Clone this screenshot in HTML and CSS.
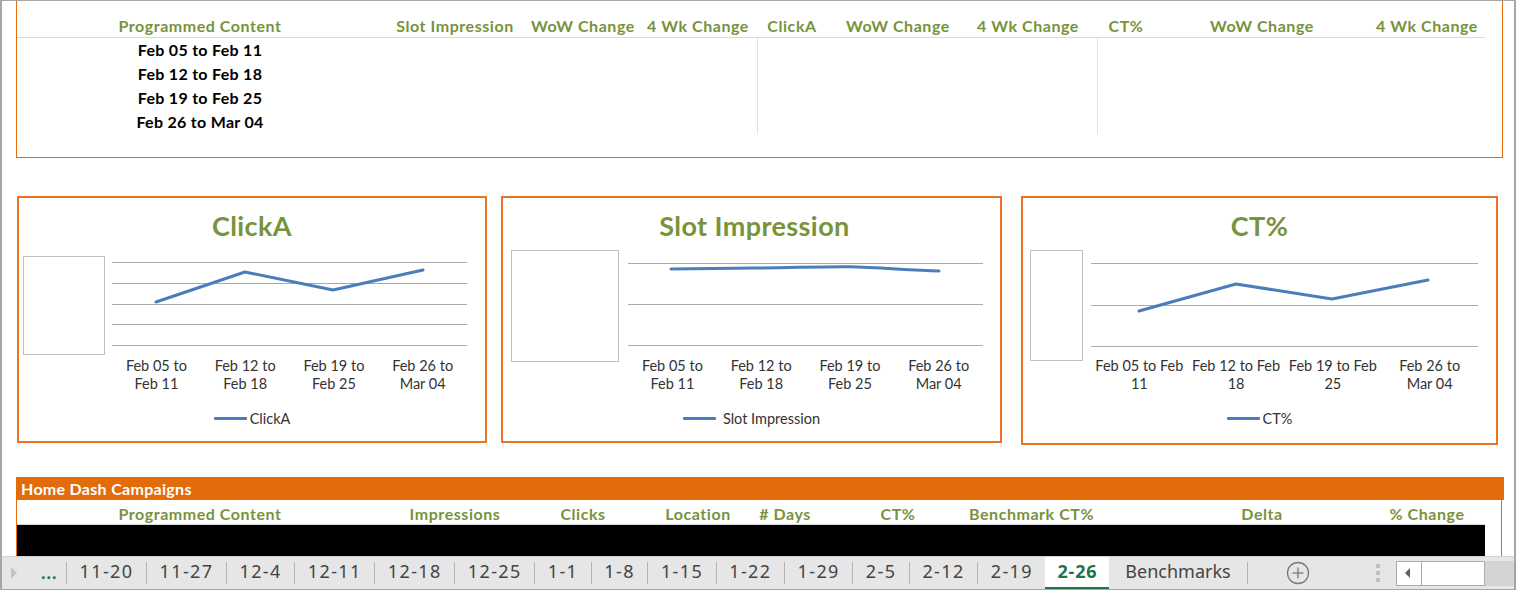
FILE: index.html
```html
<!DOCTYPE html>
<html>
<head>
<meta charset="utf-8">
<link rel="stylesheet" href="styles.css">
</head>
<body>
<div class="window">
  <div class="sheet">
    <section class="top-box">
      <div class="cols hdr-row hdr-top">
        <div class="hdr">Programmed Content</div>
        <div class="hdr">Slot Impression</div>
        <div class="hdr">WoW Change</div>
        <div class="hdr">4 Wk Change</div>
        <div class="hdr">ClickA</div>
        <div class="hdr">WoW Change</div>
        <div class="hdr c7">4 Wk Change</div>
        <div class="hdr">CT%</div>
        <div class="hdr">WoW Change</div>
        <div class="hdr">4 Wk Change</div>
      </div>
      <div class="top-body">
        <div class="grp g1">
          <div class="dates">
            <div>Feb 05 to Feb 11</div>
            <div>Feb 12 to Feb 18</div>
            <div>Feb 19 to Feb 25</div>
            <div>Feb 26 to Mar 04</div>
          </div>
        </div>
        <div class="grp g2"></div>
        <div class="grp g3"></div>
      </div>
    </section>

    <div class="charts">
      <div class="chart ch1">
        <div class="ctitle">ClickA</div>
        <div class="cbody">
          <div class="ybox"></div>
          <div class="plot">
            <svg class="psvg" width="355" height="103" viewBox="0 0 355 103">
              <g class="grid">
                <line x1="0" y1="18.5" x2="355" y2="18.5"/>
                <line x1="0" y1="39.5" x2="355" y2="39.5"/>
                <line x1="0" y1="60.5" x2="355" y2="60.5"/>
                <line x1="0" y1="80.5" x2="355" y2="80.5"/>
                <line x1="0" y1="101.5" x2="355" y2="101.5"/>
              </g>
              <polyline class="series" points="44,58 133,28 221,46 311,26"/>
            </svg>
            <div class="xlabels">
              <div>Feb 05 to<br>Feb 11</div>
              <div>Feb 12 to<br>Feb 18</div>
              <div>Feb 19 to<br>Feb 25</div>
              <div>Feb 26 to<br>Mar 04</div>
            </div>
          </div>
        </div>
        <div class="legend"><span class="lkey"></span><span>ClickA</span></div>
      </div>

      <div class="chart ch2">
        <div class="ctitle">Slot Impression</div>
        <div class="cbody">
          <div class="ybox"></div>
          <div class="plot">
            <svg class="psvg" width="355" height="103" viewBox="0 0 355 103">
              <g class="grid">
                <line x1="0" y1="19.5" x2="355" y2="19.5"/>
                <line x1="0" y1="60.5" x2="355" y2="60.5"/>
                <line x1="0" y1="101.5" x2="355" y2="101.5"/>
              </g>
              <path class="series" d="M43,25 C90,24.5 110,24.3 132,24 C170,23.5 200,22.5 221,22.8 C250,23.5 280,26 311,27"/>
            </svg>
            <div class="xlabels">
              <div>Feb 05 to<br>Feb 11</div>
              <div>Feb 12 to<br>Feb 18</div>
              <div>Feb 19 to<br>Feb 25</div>
              <div>Feb 26 to<br>Mar 04</div>
            </div>
          </div>
        </div>
        <div class="legend"><span class="lkey"></span><span>Slot Impression</span></div>
      </div>

      <div class="chart ch3">
        <div class="ctitle">CT%</div>
        <div class="cbody">
          <div class="ybox"></div>
          <div class="plot">
            <svg class="psvg" width="387" height="104" viewBox="0 0 387 104">
              <g class="grid">
                <line x1="0" y1="19.5" x2="387" y2="19.5"/>
                <line x1="0" y1="61.5" x2="387" y2="61.5"/>
                <line x1="0" y1="102.5" x2="387" y2="102.5"/>
              </g>
              <polyline class="series" points="48,67 145,40 241,55 337,36"/>
            </svg>
            <div class="xlabels">
              <div>Feb 05 to Feb<br>11</div>
              <div>Feb 12 to Feb<br>18</div>
              <div>Feb 19 to Feb<br>25</div>
              <div>Feb 26 to<br>Mar 04</div>
            </div>
          </div>
        </div>
        <div class="legend"><span class="lkey"></span><span>CT%</span></div>
      </div>
    </div>

    <section class="campaigns">
      <div class="camp-title">Home Dash Campaigns</div>
      <div class="camp-body">
        <div class="cols hdr-row hdr-camp">
          <div class="hdr">Programmed Content</div>
          <div class="hdr">Impressions</div>
          <div class="hdr">Clicks</div>
          <div class="hdr">Location</div>
          <div class="hdr days">#&nbsp;Days</div>
          <div class="hdr">CT%</div>
          <div class="hdr c7">Benchmark CT%</div>
          <div class="hdr"></div>
          <div class="hdr">Delta</div>
          <div class="hdr">% Change</div>
        </div>
        <div class="black"></div>
      </div>
    </section>
  </div>

  <div class="tabbar">
    <div class="nav">
      <svg class="navarrow" width="7" height="12" viewBox="0 0 7 12"><path d="M0,0 L6,6 L0,12 Z"/></svg>
      <span class="more">...</span>
    </div>
    <i class="sep"></i>
    <div class="tab">11-20</div><i class="sep"></i>
    <div class="tab">11-27</div><i class="sep"></i>
    <div class="tab">12-4</div><i class="sep"></i>
    <div class="tab">12-11</div><i class="sep"></i>
    <div class="tab">12-18</div><i class="sep"></i>
    <div class="tab">12-25</div><i class="sep"></i>
    <div class="tab">1-1</div><i class="sep"></i>
    <div class="tab">1-8</div><i class="sep"></i>
    <div class="tab">1-15</div><i class="sep"></i>
    <div class="tab">1-22</div><i class="sep"></i>
    <div class="tab">1-29</div><i class="sep"></i>
    <div class="tab">2-5</div><i class="sep"></i>
    <div class="tab">2-12</div><i class="sep"></i>
    <div class="tab">2-19</div>
    <div class="tab active">2-26</div>
    <div class="tab bench">Benchmarks</div><i class="sep"></i>
    <svg class="plus" width="24" height="24" viewBox="0 0 24 24">
      <circle cx="12" cy="12" r="10.5"/>
      <line x1="12" y1="6.5" x2="12" y2="17.5"/>
      <line x1="6.5" y1="12" x2="17.5" y2="12"/>
    </svg>
    <div class="vdots"><b></b><b></b><b></b></div>
    <div class="hscroll">
      <div class="sbtn"><svg width="5" height="10" viewBox="0 0 5 10"><path d="M5,0 L0,5 L5,10 Z"/></svg></div>
      <div class="strack"></div>
    </div>
    <div class="sfill"></div>
  </div>
</div>
</body>
</html>
```

FILE: styles.css
```css
* { box-sizing: border-box; margin: 0; padding: 0; }
html, body { width: 1516px; height: 590px; overflow: hidden; background: #fff; }
body { font-family: Lato, "Liberation Sans", sans-serif; }

.window {
  width: 1516px;
  height: 590px;
  border-top: 1px solid #a6a6a6;
  border-left: 2px solid #a6a6a6;
  border-right: 2px solid #a6a6a6;
  display: flex;
  flex-direction: column;
}
.sheet { height: 555px; flex: none; overflow: hidden; }

/* ---------- top summary table ---------- */
.top-box {
  margin-left: 14px;
  width: 1487px;
  border: 1px solid #e46c0a;
  border-top: none;
  padding-bottom: 23px;
}
.cols {
  display: grid;
  grid-template-columns: 366px 144px 112px 118px 70px 142px 128px 58px 214px 116px;
  width: 1468px;
}
.hdr-row { align-items: end; border-bottom: 1px solid #d9d9d9; }
.hdr-top { height: 37px; padding-bottom: 1px; }
.hdr {
  color: #77933c;
  font-weight: 700;
  font-size: 16px;
  letter-spacing: 0.55px;
  line-height: 20px;
  text-align: center;
  white-space: nowrap;
}
.hdr.c7 { padding-right: 10px; }
.hdr.days { padding-right: 14px; }

.top-body { display: flex; height: 96px; }
.g1 { width: 740px; }
.g2 { width: 340px; border-left: 1px solid #e3e3e3; }
.g3 { width: 388px; border-left: 1px solid #e3e3e3; }
.dates {
  width: 366px;
  text-align: center;
  font-weight: 700;
  font-size: 16px;
  letter-spacing: 0.3px;
  line-height: 24px;
  color: #000;
}

/* ---------- charts ---------- */
.charts { display: flex; align-items: flex-start; margin-top: 38px; margin-left: 15px; }
.chart { border: 2px solid #ea7424; background: #fff; }
.ch1 { width: 470px; height: 247px; }
.ch2 { width: 501px; height: 247px; margin-left: 14px; }
.ch3 { width: 477px; height: 249px; margin-left: 19px; }

.ctitle {
  margin-top: 11px;
  height: 34px;
  line-height: 34px;
  text-align: center;
  font-size: 27px;
  letter-spacing: 0.4px;
  font-weight: 700;
  color: #77933c;
}
.ch2 .ctitle { padding-left: 6px; }
.cbody { display: grid; align-items: start; margin-top: 1px; }
.ch1 .cbody { grid-template-columns: 82px 355px; column-gap: 7px; padding-left: 4px; }
.ch2 .cbody { grid-template-columns: 108px 355px; column-gap: 9px; padding-left: 8px; }
.ch3 .cbody { grid-template-columns: 53px 387px; column-gap: 8px; padding-left: 7px; }

.ybox { border: 1px solid #bfbfbf; }
.ch1 .ybox { margin-top: 12px; height: 99px; }
.ch2 .ybox { margin-top: 6px; height: 112px; }
.ch3 .ybox { margin-top: 6px; height: 111px; }

.psvg { display: block; }
.grid line { stroke: #ababab; stroke-width: 1; }
.series { fill: none; stroke: #4a7ebb; stroke-width: 3; stroke-linecap: round; stroke-linejoin: round; }

.xlabels {
  display: grid;
  grid-template-columns: repeat(4, 1fr);
  margin-top: 10px;
  font-size: 14.5px;
  line-height: 18px;
  color: #333;
  text-align: center;
  white-space: nowrap;
}
.ch3 .xlabels { margin-top: 9px; }

.legend {
  display: flex;
  justify-content: center;
  align-items: center;
  margin-top: 16px;
  height: 18px;
  font-size: 14.5px;
  color: #333;
}
.lkey { width: 33px; height: 3px; background: #4a7ebb; margin-right: 3px; border-radius: 1px; }
.ch2 .lkey { margin-right: 7px; }

/* ---------- campaigns ---------- */
.campaigns { margin-top: 32px; margin-left: 14px; width: 1488px; }
.camp-title {
  height: 23px;
  line-height: 24px;
  background: #e26b0a;
  color: #fff;
  font-weight: 700;
  font-size: 16px;
  letter-spacing: 0.3px;
  padding-left: 5px;
}
.camp-body {
  width: 1486px;
  border-left: 1px solid #e26b0a;
  border-right: 1px solid #e26b0a;
}
.hdr-camp { height: 25px; }
.black { width: 1468px; height: 31px; background: #000; }

/* ---------- sheet tabs ---------- */
.tabbar {
  height: 34px;
  flex: none;
  display: flex;
  align-items: stretch;
  background: #e6e6e6;
  border-top: 1px solid #d2d2d2;
  border-bottom: 1px solid #a6a6a6;
  font-family: "Noto Sans", "Open Sans", sans-serif;
  font-size: 18px;
  color: #444;
}
.nav { width: 64px; display: flex; align-items: center; }
.navarrow { margin-left: 9px; fill: #c3c3c3; }
.more { margin-left: 23px; color: #217346; font-weight: 700; font-size: 16px; letter-spacing: 1px; line-height: 1; }
.sep { display: block; width: 1px; height: 22px; align-self: center; background: #b4b4b4; }
.tab {
  display: flex;
  align-items: center;
  padding: 0 12.5px 5px;
  white-space: nowrap;
  letter-spacing: 1.4px;
}
.tab.bench { letter-spacing: 0; padding: 0 16px 5px; }
.tab.active {
  background: #fff;
  color: #217346;
  font-weight: 700;
  border-bottom: 2px solid #217346;
  padding: 0 12px 3px;
  letter-spacing: 0.8px;
}
.plus { align-self: center; margin-left: 38px; }
.plus circle, .plus line { fill: none; stroke: #7a7a7a; stroke-width: 1.3; }
.vdots { margin-left: auto; width: 4px; display: flex; flex-direction: column; justify-content: center; gap: 3px; }
.vdots b { display: block; width: 4px; height: 4px; background: #c0c0c0; }
.hscroll {
  margin-left: 16px;
  width: 89px;
  height: 25px;
  align-self: center;
  display: flex;
  background: #fff;
  border: 1px solid #ababab;
}
.sbtn { width: 25px; border-right: 1px solid #ababab; display: flex; align-items: center; justify-content: center; }
.sbtn svg { fill: #606060; margin-right: 4px; }
.strack { flex: 1; }
.sfill { width: 29px; height: 25px; align-self: center; background: #d4d4d4; }
```
